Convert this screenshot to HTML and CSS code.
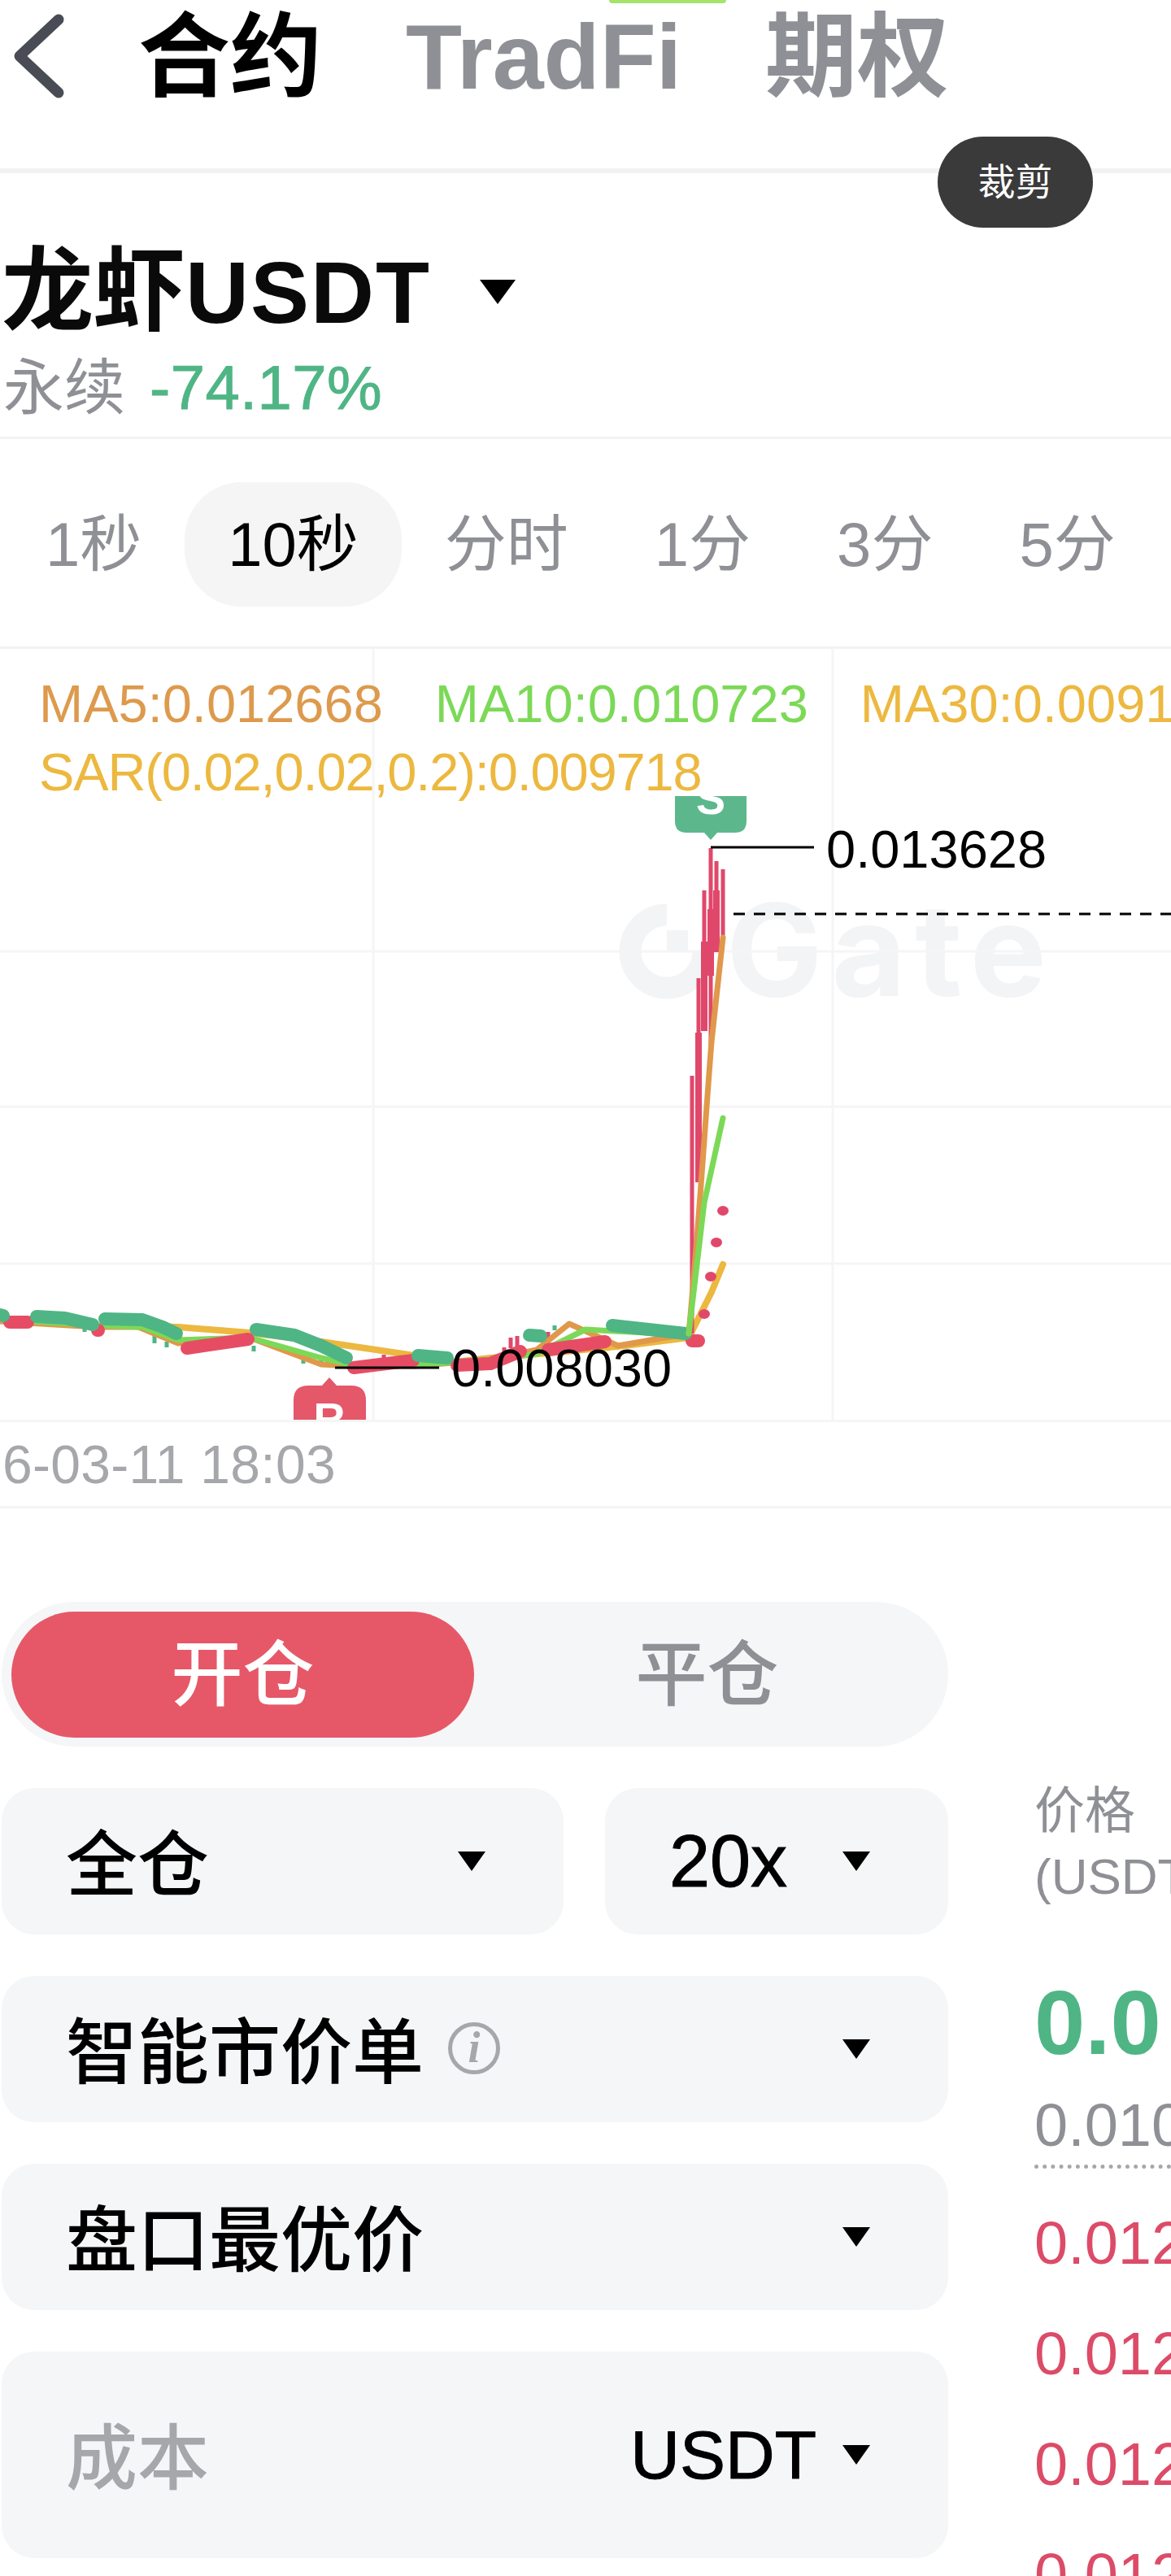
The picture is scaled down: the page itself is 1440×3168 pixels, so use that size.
FILE: index.html
```html
<!DOCTYPE html>
<html lang="zh-CN">
<head>
  <meta charset="UTF-8">
  <title>龙虾USDT 合约</title>
  <link rel="stylesheet" href="styles.css">
</head>
<body>

<div class="page">
  <header class="top-tabs">
    <span class="promo-dash"></span>
    <svg class="back-icon" width="170" height="136" viewBox="0 0 170 136">
      <path d="M72 22 L24 67 L72 112" fill="none" stroke="#4a4c55" stroke-width="13" stroke-linecap="round" stroke-linejoin="round"/>
    </svg>
    <span class="top-tab active">合约</span>
    <span class="top-tab">TradFi</span>
    <span class="top-tab">期权</span>
    <span class="crop-btn">裁剪</span>
  </header>

  <section class="symbol">
    <div class="symbol-title">
      <h1><span class="symbol-name">龙虾</span>USDT</h1>
      <span class="caret caret-lg"></span>
    </div>
    <div class="symbol-sub">
      <span class="perp">永续</span>
      <span class="change">-74.17%</span>
    </div>
  </section>

  <nav class="intervals">
    <span class="interval">1秒</span>
    <span class="interval active">10秒</span>
    <span class="interval">分时</span>
    <span class="interval">1分</span>
    <span class="interval">3分</span>
    <span class="interval">5分</span>
  </nav>

  <section class="chart">
    <span class="watermark">Gate</span>

    <svg class="chart-svg" width="1440" height="948" viewBox="0 798 1440 948">
      <defs>
        <clipPath id="below-legend"><rect x="0" y="979" width="1440" height="767"/></clipPath>
      </defs>

      <!-- grid -->
      <g stroke="#f5f5f6" stroke-width="3">
        <path d="M459 798 V1746 M1024 798 V1746"/>
        <path d="M0 1170 H1440 M0 1361 H1440 M0 1554 H1440"/>
      </g>

      <!-- watermark logo -->
      <g fill="none" stroke="#f3f4f5">
        <path d="M820 1125 A45 45 0 1 0 865 1170" stroke-width="27"/>
      </g>
      <rect x="820" y="1144" width="26" height="26" fill="#f3f4f5"/>

      <!-- small wicks -->
      <g stroke="#4fb585" stroke-width="5">
        <path d="M104 1625 V1638 M190 1640 V1652 M205 1650 V1657 M312 1655 V1662 M373 1665 V1677 M395 1670 V1679 M682 1630 V1636"/>
      </g>
      <g stroke="#e0486b" stroke-width="5">
        <path d="M628 1645 V1658 M636 1643 V1656 M674 1638 V1652 M620 1657 V1666 M472 1666 V1674"/>
      </g>

      <!-- long lines -->
      <g fill="none" stroke-linecap="round" stroke-linejoin="round">
        <path d="M125 1630 L219 1632 L307 1639 L395 1650 L510 1667 L560 1675 L603 1670 L686 1663 L768 1655 L847 1645 L875 1589 L889 1555" stroke="#ecb83f" stroke-width="8"/>
        <path d="M0 1625 L118 1632 L170 1632 L219 1652 L307 1645 L395 1678 L433 1680 L510 1680 L603 1672 L660 1660 L700 1628 L760 1655 L847 1640" stroke="#e0984a" stroke-width="7"/>
        <path d="M40 1625 L118 1630 L175 1632 L219 1648 L307 1645 L395 1670 L440 1680 L520 1678 L603 1672 L660 1665 L720 1635 L847 1642" stroke="#7cd957" stroke-width="7"/>
      </g>

      <!-- thick bodies -->
      <g fill="none" stroke-linecap="round" stroke-linejoin="round" stroke-width="16">
        <g stroke="#e64d65">
          <path d="M12 1626 H34"/>
          <path d="M120 1636 H121"/>
          <path d="M230 1658 L305 1647"/>
          <path d="M435 1682 L508 1673"/>
          <path d="M562 1679 L603 1677 L640 1662"/>
          <path d="M674 1660 L744 1650"/>
          <path d="M851 1649 H859"/>
        </g>
        <g stroke="#4fb585">
          <path d="M0 1617 L4 1618"/>
          <path d="M45 1619 L80 1621 L114 1629"/>
          <path d="M129 1622 L175 1623 L200 1632 L217 1640"/>
          <path d="M315 1635 L362 1642 L395 1655 L426 1670"/>
          <path d="M514 1667 L550 1670"/>
          <path d="M651 1642 L665 1643"/>
          <path d="M753 1630 L843 1640"/>
        </g>
      </g>

      <!-- spike candles -->
      <g stroke="#e0486b" stroke-width="5">
        <path d="M851 1323 V1640 M859 1203 V1454 M866 1095 V1268 M874 1043 V1295 M881 1059 V1171 M889 1069 V1150"/>
      </g>
      <g stroke="#e0486b" stroke-width="8">
        <path d="M859 1270 V1454 M866 1158 V1268 M874 1118 V1200 M881 1095 V1171"/>
      </g>
      <g fill="none" stroke-linecap="round">
        <path d="M847 1640 C860 1500 866 1396 875 1281 L889 1153" stroke="#e0984a" stroke-width="7"/>
        <path d="M847 1640 L866 1479 L889 1375" stroke="#7cd957" stroke-width="7"/>
      </g>
      <g fill="#e0486b">
        <ellipse cx="889" cy="1489" rx="7" ry="6"/>
        <ellipse cx="881" cy="1528" rx="7" ry="6"/>
        <ellipse cx="874" cy="1570" rx="7" ry="6"/>
        <ellipse cx="866" cy="1616" rx="7" ry="6"/>
      </g>

      <!-- S marker, cut off by the legend -->
      <g clip-path="url(#below-legend)">
        <path d="M830 970 H918 V1010 Q918 1024 904 1024 H882 L874 1033 L866 1024 H844 Q830 1024 830 1010 Z" fill="#5cb88c"/>
        <text class="marker-text" x="874" y="1001" text-anchor="middle">S</text>
      </g>
      <path d="M874 1042 H1001" stroke="#000" stroke-width="3"/>

      <path d="M902 1124 H1440" stroke="#000" stroke-width="3" stroke-dasharray="14 11"/>

      <!-- R marker, cut off by the axis -->
      <path d="M361 1760 V1722 Q361 1704 379 1704 H396 L405 1694 L414 1704 H432 Q450 1704 450 1722 V1760 Z" fill="#e4586a"/>
      <text class="marker-text" x="405" y="1763" text-anchor="middle">R</text>

      <path d="M412 1682 H540" stroke="#000" stroke-width="3"/>
    </svg>

    <div class="legend">
      <div class="legend-row">
        <span class="ma5">MA5:0.012668</span>
        <span class="ma10">MA10:0.010723</span>
        <span class="ma30">MA30:0.0091</span>
      </div>
      <div class="legend-row">
        <span class="ma30 sar">SAR(0.02,0.02,0.2):0.009718</span>
      </div>
    </div>

    <span class="price-tag tag-high">0.013628</span>
    <span class="price-tag tag-low">0.008030</span>
  </section>

  <div class="time-axis">6-03-11 18:03</div>

  <section class="trade">
    <div class="order-form">
      <div class="toggle">
        <span class="toggle-item active">开仓</span>
        <span class="toggle-item">平仓</span>
      </div>
      <div class="form-row">
        <div class="field field-margin">
          <span class="field-text">全仓</span>
          <span class="caret"></span>
        </div>
        <div class="field field-leverage">
          <span class="field-latin field-lev">20x</span>
          <span class="caret"></span>
        </div>
      </div>
      <div class="field">
        <span class="field-label"><span class="field-text">智能市价单</span><i class="info">i</i></span>
        <span class="caret"></span>
      </div>
      <div class="field">
        <span class="field-text">盘口最优价</span>
        <span class="caret"></span>
      </div>
      <div class="field field-tall">
        <span class="field-text placeholder">成本</span>
        <span class="field-unit"><span class="field-latin">USDT</span><span class="caret"></span></span>
      </div>
    </div>

    <div class="book">
      <div class="book-head">价格<br>(USDT)</div>
      <div class="book-last">0.0</div>
      <div class="book-mark">0.010</div>
      <div class="book-ask">0.012</div>
      <div class="book-ask">0.012</div>
      <div class="book-ask">0.012</div>
      <div class="book-ask">0.012</div>
    </div>
  </section>
</div>

</body>
</html>
```

FILE: styles.css
```css
body {
  margin: 0;
  background-color: #ffffff;
  color: #000;
  font-family: "Liberation Sans", "Noto Sans CJK SC", sans-serif;
}

.page {
  width: 1440px;
  height: 3168px;
  overflow: hidden;
}

.caret {
  display: inline-block;
  flex: none;
  width: 0;
  height: 0;
  border-left: 17px solid transparent;
  border-right: 17px solid transparent;
  border-top: 24px solid #000;
}

.caret-lg {
  border-left-width: 22px;
  border-right-width: 22px;
  border-top-width: 30px;
}

/* top tabs */
.top-tabs {
  position: relative;
  display: flex;
  align-items: center;
  gap: 103px;
  height: 207px;
  border-bottom: 6px solid #f1f2f3;
}

.back-icon {
  margin-right: -103px;
  margin-top: -68px;
}

.top-tab {
  margin-top: -68px;
  font-size: 113px;
  line-height: 136px;
  font-weight: bold;
  color: #8e9095;
}

.top-tab.active {
  color: #000;
}

.promo-dash {
  position: absolute;
  left: 749px;
  top: 0;
  width: 144px;
  height: 4px;
  border-radius: 0 0 10px 10px;
  background-color: #a6e36a;
}

.crop-btn {
  position: absolute;
  left: 1153px;
  top: 168px;
  width: 191px;
  height: 112px;
  border-radius: 56px;
  background-color: #3a3a3a;
  color: #fff;
  font-size: 46px;
  line-height: 112px;
  text-align: center;
}

/* symbol */
.symbol {
  height: 324px;
  border-bottom: 3px solid #f2f3f4;
}

.symbol-title {
  display: flex;
  align-items: center;
  gap: 60px;
  padding-top: 78px;
  padding-left: 2px;
  height: 136px;
}

.symbol-title h1 {
  margin: 0;
  font-size: 108px;
  line-height: 136px;
  font-weight: bold;
  letter-spacing: 2px;
  color: #0a0a0a;
}

.symbol-name {
  font-size: 113px;
  letter-spacing: 0;
}

.symbol-sub {
  display: flex;
  gap: 30px;
  padding-left: 4px;
  font-size: 75px;
  line-height: 100px;
}

.perp {
  color: #8e9095;
}

.change {
  font-size: 76px;
  letter-spacing: 0.4px;
  color: #4fb585;
  -webkit-text-stroke: 1px #4fb585;
}

/* intervals */
.intervals {
  display: flex;
  height: 202px;
  padding: 53px 0 0 3px;
  border-bottom: 3px solid #f2f3f4;
}

.interval {
  height: 153px;
  padding: 0 53px;
  border-radius: 70px;
  font-size: 76px;
  line-height: 153px;
  color: #8e9095;
}

.interval.active {
  background-color: #f5f5f5;
  color: #000;
}

/* chart */
.chart {
  position: relative;
  height: 948px;
  overflow: hidden;
}

.chart-svg {
  position: relative;
  display: block;
}

.marker-text {
  font-size: 54px;
  font-weight: bold;
  fill: #fff;
}

.watermark {
  position: absolute;
  left: 893px;
  top: 290px;
  font-family: Inter, "Liberation Sans", sans-serif;
  font-size: 158px;
  line-height: 160px;
  font-weight: 700;
  letter-spacing: 11px;
  color: #f3f4f5;
}

.legend {
  position: absolute;
  left: 48px;
  top: 26px;
  font-size: 65px;
  line-height: 84px;
}

.legend-row {
  display: flex;
  gap: 64px;
  white-space: nowrap;
}

.ma5 {
  color: #dd9a4d;
}

.ma10 {
  color: #7cd957;
}

.ma30 {
  color: #ecb83f;
}

.sar {
  letter-spacing: -1.15px;
}

.price-tag {
  position: absolute;
  font-size: 65px;
  line-height: 70px;
  color: #000;
}

.tag-high {
  left: 1016px;
  top: 212px;
}

.tag-low {
  left: 555px;
  top: 850px;
}

/* time axis */
.time-axis {
  height: 103px;
  padding-left: 3px;
  border-top: 3px solid #f5f5f6;
  border-bottom: 3px solid #f5f5f6;
  font-size: 66px;
  line-height: 105px;
  letter-spacing: 0.3px;
  color: #a5a7ab;
}

/* order form */
.trade {
  display: flex;
  gap: 106px;
  padding: 115px 0 0 2px;
}

.order-form {
  display: flex;
  flex-direction: column;
  gap: 51px;
  flex: none;
  width: 1164px;
}

.toggle {
  display: grid;
  grid-template-columns: 569px 1fr;
  align-items: center;
  height: 178px;
  padding-left: 12px;
  border-radius: 89px;
  background-color: #f5f6f7;
}

.toggle-item {
  height: 155px;
  padding-right: 10px;
  border-radius: 78px;
  font-size: 88px;
  line-height: 155px;
  font-weight: 500;
  text-align: center;
  color: #8e9095;
}

.toggle-item.active {
  padding-right: 0;
  background-color: #e65868;
  color: #fff;
}

.form-row {
  display: flex;
  gap: 51px;
}

.field {
  display: flex;
  align-items: center;
  justify-content: space-between;
  height: 180px;
  padding: 0 96px 0 79px;
  border-radius: 40px;
  background-color: #f5f6f7;
  font-size: 88px;
  font-weight: 500;
  box-sizing: border-box;
}

.field-text {
  margin-top: -8px;
}

.field-latin {
  -webkit-text-stroke: 1px #000;
}

.field-lev {
  font-size: 90px;
}

.field-margin {
  flex: none;
  width: 691px;
}

.field-leverage {
  flex: 1;
}

.field-label {
  display: flex;
  align-items: center;
}

.info {
  display: inline-block;
  width: 64px;
  height: 64px;
  margin-left: 30px;
  margin-top: -2px;
  border: 5px solid #a5a7ab;
  border-radius: 50%;
  box-sizing: border-box;
  font-family: "Liberation Serif", serif;
  font-size: 54px;
  font-weight: bold;
  line-height: 52px;
  text-align: center;
  color: #a5a7ab;
}

.field-tall {
  height: 254px;
}

.placeholder {
  color: #a5a7ab;
}

.field-unit {
  display: flex;
  align-items: center;
  gap: 32px;
  font-size: 84px;
}

/* order book */
.book {
  flex: 1;
  overflow: hidden;
  white-space: nowrap;
}

.book-head {
  margin-top: 218px;
  font-size: 62px;
  line-height: 80px;
  color: #8e9095;
}

.book-last {
  margin-top: 80px;
  font-size: 112px;
  line-height: 120px;
  font-weight: bold;
  color: #4fb585;
}

.book-mark {
  margin-top: 24px;
  padding-bottom: 6px;
  border-bottom: 5px dotted #a5a7ab;
  font-size: 74px;
  line-height: 84px;
  color: #8e9095;
}

.book-ask {
  height: 136px;
  font-size: 74px;
  line-height: 136px;
  color: #dc4b68;
}

.book-mark + .book-ask {
  margin-top: 24px;
}
```
